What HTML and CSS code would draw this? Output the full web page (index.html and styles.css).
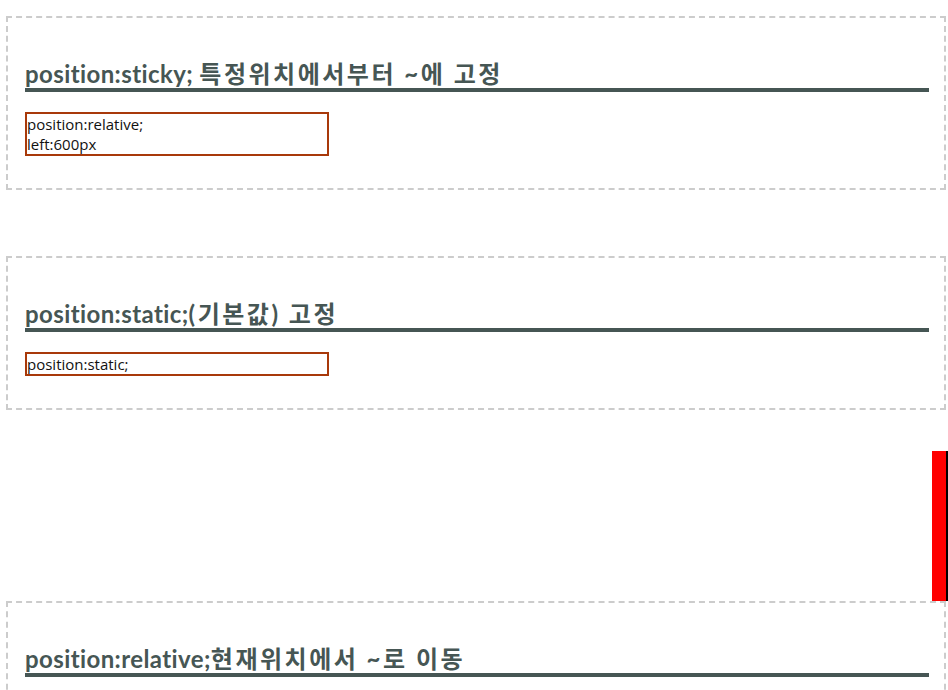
FILE: index.html
```html
<!DOCTYPE html>
<html lang="ko">
<head>
<meta charset="utf-8">
<title>position</title>
<link rel="stylesheet" href="styles.css">
</head>
<body>
<div class="page">
  <section class="demo demo-sticky">
    <h2 class="demo-title">position:sticky; <span class="ko">특정위치에서부터 ~에 고정</span></h2>
    <div class="sample">position:relative;<br>left:600px</div>
  </section>

  <section class="demo demo-static">
    <h2 class="demo-title">position:static;<span class="ko">(기본값) 고정</span></h2>
    <div class="sample">position:static;</div>
  </section>

  <div class="sticky-bar"></div>

  <section class="demo demo-relative">
    <h2 class="demo-title">position:relative;<span class="ko">현재위치에서 ~로 이동</span></h2>
  </section>
</div>
</body>
</html>
```

FILE: styles.css
```css
html, body {
  margin: 0;
  padding: 0;
  background: #ffffff;
}

body {
  font-family: "Open Sans", "Noto Sans CJK KR", sans-serif;
  color: #111;
  overflow: hidden;
}

.page {
  padding: 16px 2px 0 6px;
  display: flex;
  flex-direction: column;
}

.demo {
  border: 2px dashed #cccccc;
  padding: 41px 15px 32px 17px;
}

.demo-sticky {
  margin-bottom: 66px;
}

.demo-title {
  margin: 0 0 20px;
  font-family: "Lato", "Noto Sans CJK KR", sans-serif;
  font-size: 24px;
  line-height: 29px;
  font-weight: 700;
  letter-spacing: 0.4px;
  color: #465654;
  border-bottom: 4px solid #465654;
}

.ko {
  letter-spacing: 2.5px;
}

.sample {
  width: 300px;
  border: 2px solid #a8390a;
  font-size: 15px;
  line-height: 20px;
  color: #111;
}

.sticky-bar {
  align-self: flex-end;
  margin: 41px -2px 0 0;
  width: 14px;
  height: 150px;
  background: #ff0000;
  border-right: 2px solid #000;
}
```
